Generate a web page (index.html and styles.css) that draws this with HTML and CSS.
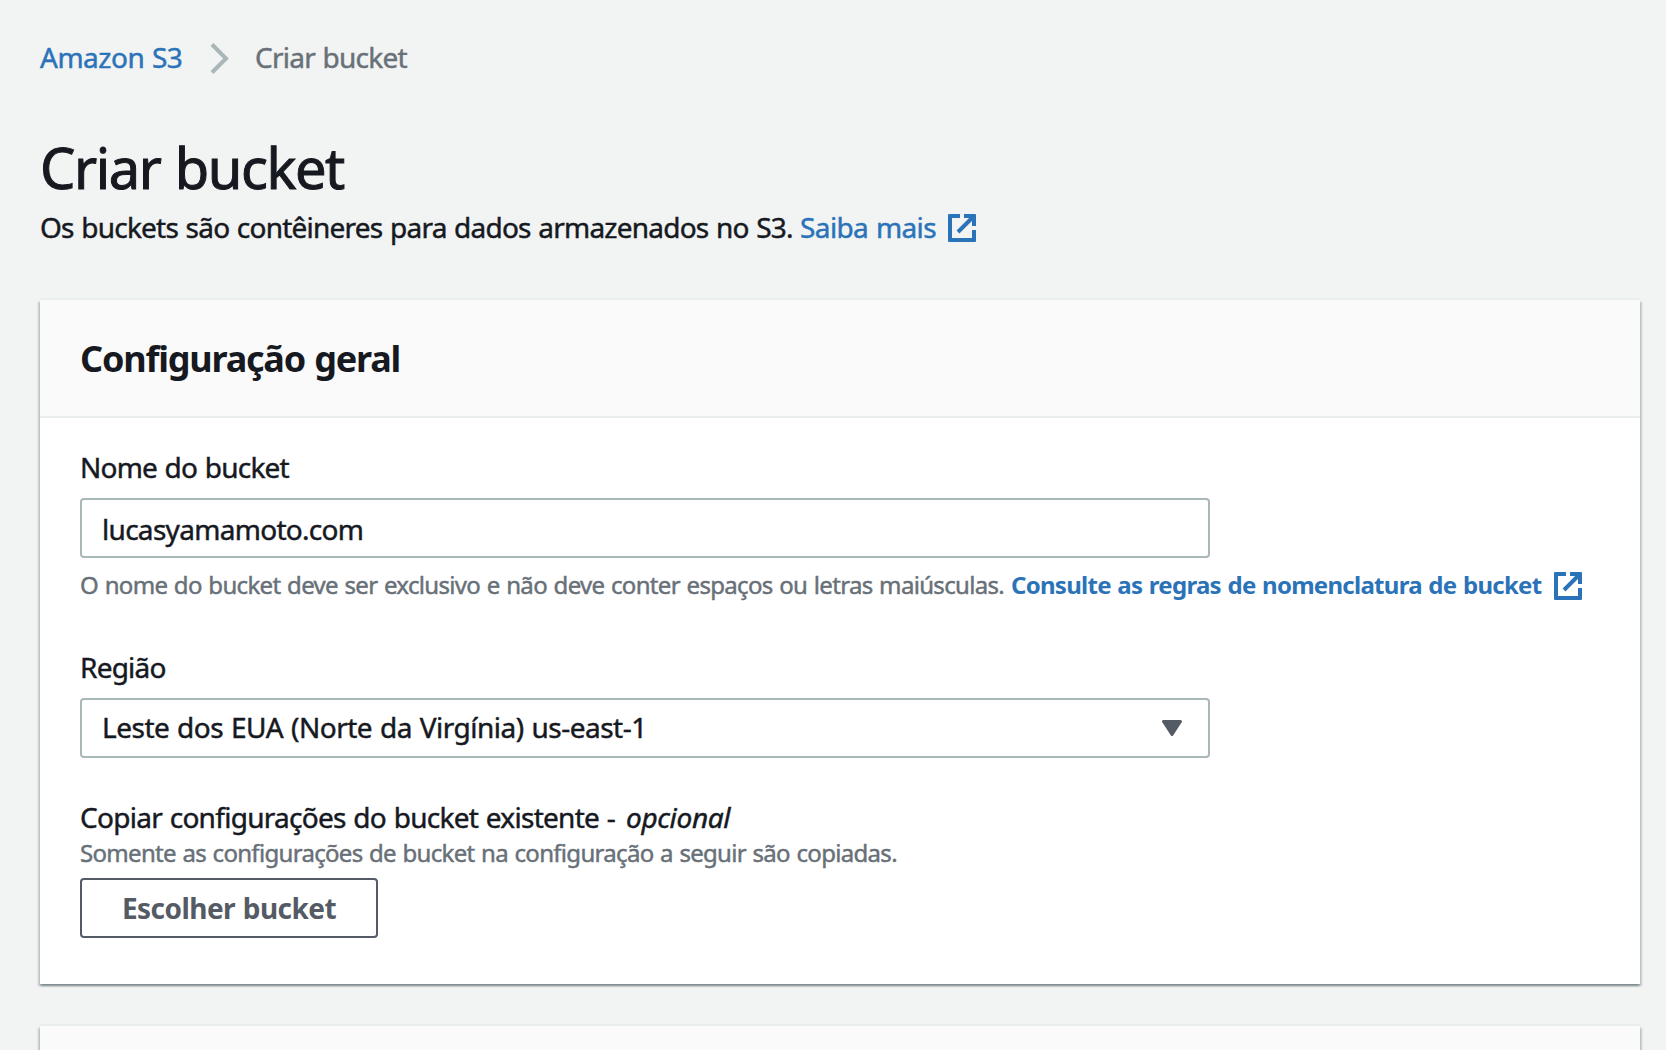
FILE: index.html
```html
<!DOCTYPE html>
<html lang="pt-BR">
<head>
<meta charset="utf-8">
<title>Criar bucket</title>
<link rel="stylesheet" href="styles.css">
</head>
<body>
<svg class="defs" aria-hidden="true">
  <symbol id="external" viewBox="0 0 28 28">
    <path d="M12 2H2V26H26V16M16 2H26V12M10 18L25 3" fill="none" stroke="currentColor" stroke-width="4"/>
  </symbol>
</svg>
<main class="page">
  <nav class="breadcrumb">
    <a class="crumb-link" href="#">Amazon S3</a>
    <svg class="chevron" viewBox="0 0 20 32"><path d="M2 2.5L16 16.5L2 30.5" fill="none" stroke="currentColor" stroke-width="4"/></svg>
    <span class="crumb-current">Criar bucket</span>
  </nav>
  <header class="intro">
    <h1 class="title">Criar bucket</h1>
    <p class="lead"><span class="lead-text">Os buckets são contêineres para dados armazenados no S3. </span><a class="link" href="#"><span class="more">Saiba mais</span><svg class="external"><use href="#external"/></svg></a></p>
  </header>
  <section class="card">
    <div class="card-head"><h2 class="card-title">Configuração geral</h2></div>
    <div class="card-body">
      <div class="field">
        <label class="label name-label" for="name">Nome do bucket</label>
        <input class="control input" id="name" type="text" value="lucasyamamoto.com">
        <p class="hint"><span class="hint-text">O nome do bucket deve ser exclusivo e não deve conter espaços ou letras maiúsculas. </span><a class="link strong" href="#"><span class="rules">Consulte as regras de nomenclatura de bucket</span><svg class="external"><use href="#external"/></svg></a></p>
      </div>
      <div class="field">
        <div class="label region-label">Região</div>
        <div class="control select"><span class="region">Leste dos EUA (Norte da Virgínia) us-east-1</span><svg class="caret" viewBox="0 0 20 16"><path d="M1.5 1.5H18.5L10 14.5Z" fill="currentColor" stroke="currentColor" stroke-width="3" stroke-linejoin="round"/></svg></div>
      </div>
      <div class="field copy">
        <div class="label copy-label"><span class="copy-text">Copiar configurações do bucket existente -</span><em class="optional">opcional</em></div>
        <p class="copy-hint">Somente as configurações de bucket na configuração a seguir são copiadas.</p>
        <button class="button" type="button">Escolher bucket</button>
      </div>
    </div>
  </section>
  <section class="card next"></section>
</main>
</body>
</html>
```
FILE: styles.css
```css
* { box-sizing: border-box; }
body {
  margin: 0;
  height: 1050px;
  overflow: hidden;
  background: #f2f3f3;
  color: #16191f;
  font: 400 28px/44px "Noto Sans", "Open Sans", sans-serif;
  letter-spacing: -0.77px;
  word-spacing: 1px;
  white-space: nowrap;
  -webkit-text-stroke: 0.45px currentColor;
}
h1, h2, p { margin: 0; }
a { color: inherit; text-decoration: none; }
.defs { display: none; }
.page { padding: 35px 26px 0 40px; }

.breadcrumb { display: flex; align-items: center; height: 44px; }
.crumb-link { width: 170px; color: #2b73b8; letter-spacing: -0.5px; }
.chevron { width: 20px; height: 32px; margin-top: 1px; color: #aab7b8; }
.crumb-current { margin-left: 25px; color: #687078; letter-spacing: -0.75px; }

.intro { height: 221px; padding-top: 52px; }
.title { font-weight: 400; font-size: 56px; line-height: 72px; letter-spacing: -1.4px; -webkit-text-stroke-width: 1px; }
.lead { display: flex; align-items: center; margin-top: 2px; }
.lead-text { width: 760px; white-space: pre; }
.link { display: flex; align-items: center; color: #2b73b8; }
.external { width: 28px; height: 28px; margin-top: 2px; border-radius: 1px; }
.more { width: 148px; letter-spacing: -0.6px; }

.card {
  height: 684px;
  background: #fff;
  box-shadow: 0 -2px 0 #eaeded, 0 2px 2px rgba(0, 28, 36, .3), 2px 2px 2px rgba(0, 28, 36, .15), -2px 2px 2px rgba(0, 28, 36, .15);
}
.card-head { height: 118px; padding: 37px 40px 0; background: #fafafa; border-bottom: 2px solid #eaeded; }
.card-title { font-size: 36px; line-height: 44px; font-weight: 700; letter-spacing: -1.2px; -webkit-text-stroke-width: 0; }
.card-body { display: flex; flex-direction: column; padding: 27px 40px 0; }
.next { height: 24px; margin-top: 42px; background: #fafafa; }

.label { display: block; }
.control {
  display: flex;
  align-items: center;
  width: 1130px;
  height: 60px;
  margin-top: 9px;
  padding: 0 20px;
  border: 2px solid #aab7b8;
  border-radius: 4px;
  background: #fff;
}
.input { padding-top: 2px; font: inherit; color: inherit; letter-spacing: -0.7px; outline: 0; }
.hint { display: flex; align-items: center; margin-top: 11px; height: 32px; font-size: 24px; line-height: 32px; }
.hint-text { width: 931px; color: #687078; letter-spacing: -0.67px; white-space: pre; }
.strong { font-weight: 700; }
.rules { width: 543px; letter-spacing: -0.72px; -webkit-text-stroke-width: 0; }
.hint .external { margin-top: 2px; }
.region-label { margin-top: 44px; }
.select { justify-content: space-between; padding-right: 26px; padding-bottom: 2px; }
.region { letter-spacing: -0.49px; }
.caret { width: 20px; height: 16px; margin-top: 2px; color: #545b64; }
.copy { margin-top: 39px; }
.copy-label { display: flex; line-height: 40px; }
.copy-text { width: 546px; letter-spacing: -0.71px; }
.optional { letter-spacing: -0.35px; }
.copy-hint { margin-top: -1px; font-size: 24px; line-height: 34px; color: #687078; letter-spacing: -0.69px; }
.button {
  display: block;
  width: 298px;
  height: 60px;
  margin-top: 8px;
  padding: 0;
  border: 2px solid #545b64;
  border-radius: 4px;
  background: #fff;
  color: #545b64;
  font: inherit;
  font-weight: 700;
  letter-spacing: -0.55px;
  word-spacing: 1px;
  -webkit-text-stroke-width: 0;
}
```
